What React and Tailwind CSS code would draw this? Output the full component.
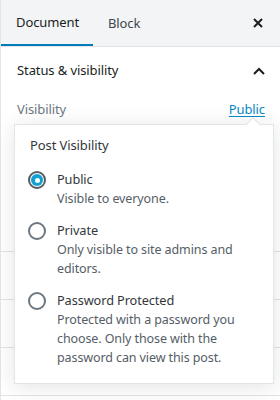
import React from 'react';

const font = { fontFamily: '"Noto Sans", "Open Sans", sans-serif' };

const options = [
  { label: 'Public', info: 'Visible to everyone.', checked: true },
  { label: 'Private', info: 'Only visible to site admins and editors.' },
  { label: 'Password Protected', info: 'Protected with a password you choose. Only those with the password can view this post.' },
];

const Radio = ({ checked }) =>
  checked ? (
    <span className="mt-[1px] flex h-[18px] w-[18px] shrink-0 items-center justify-center rounded-full border-2 border-[#555d66] bg-white">
      <span className="flex h-[12px] w-[12px] items-center justify-center rounded-full bg-[#11a0d2]">
        <span className="h-[5px] w-[5px] rounded-full bg-white" />
      </span>
    </span>
  ) : (
    <span className="mt-[1px] h-[18px] w-[18px] shrink-0 rounded-full border-2 border-[#6c7781] bg-white" />
  );

export default function App() {
  return (
    <div
      className="relative h-[400px] w-[280px] overflow-hidden border-l border-[#e2e4e7] bg-white text-[12.5px] tracking-[-0.1px] text-[#191e23]"
      style={font}
    >
      <header className="flex h-[47px] items-start border-b border-[#e2e4e7] bg-[#f3f4f5] text-[13px]">
        <button className="flex h-[46px] w-[92px] items-center border-b-2 border-[#007cba] pl-[15px] pt-[1px] text-[#191e23]">
          Document
        </button>
        <button className="flex h-[46px] items-center pl-[15px] pt-[1px] text-[#40464d]">Block</button>
        <button className="ml-auto mr-[17px] flex h-[46px] items-center">
          <svg width="10" height="10" viewBox="0 0 10 10">
            <path d="M1 1 L9 9 M9 1 L1 9" stroke="#191e23" strokeWidth="2" />
          </svg>
        </button>
      </header>

      <section className="h-[204px] px-4">
        <div className="flex h-[48px] items-center justify-between">
          <span className="text-[13px] text-[#191e23]">Status &amp; visibility</span>
          <svg width="12" height="8" viewBox="0 0 12 8" className="mr-[-1px]">
            <path d="M1 7 L6 2 L11 7" fill="none" stroke="#191e23" strokeWidth="2" />
          </svg>
        </div>
        <div className="mt-[4px] flex items-center justify-between text-[13px] leading-[20px]">
          <span className="text-[#6c7781]">Visibility</span>
          <a className="mr-[-1px] text-[#0a8ac4] underline underline-offset-2">Public</a>
        </div>
      </section>

      <div className="h-[48px] border-t border-[#e2e4e7]" />
      <div className="h-[48px] border-t border-[#e2e4e7]" />
      <div className="h-[48px] border-t border-[#e2e4e7]" />
      <div className="h-[48px] border-t border-[#e2e4e7]" />

      <div className="absolute left-[13px] top-[124px] w-[260px] border border-[#e2e4e7] bg-white pb-[16px] pl-[13px] pr-[14px] pt-[10px] shadow-[0_3px_20px_rgba(25,30,35,0.12)]">
        <span className="absolute left-[233px] top-[-6px] h-[10px] w-[10px] rotate-45 border-l border-t border-[#e2e4e7] bg-white" />
        <h2 className="ml-[2px] text-[13px] leading-[20px] text-[#32373c]">Post Visibility</h2>
        <div className="mt-[15px] flex flex-col gap-[13px]">
          {options.map((o) => (
            <label key={o.label} className="flex gap-[11px] leading-[19px]">
              <Radio checked={o.checked} />
              <span className="flex flex-col">
                <span className="text-[12.75px] text-[#32373c]">{o.label}</span>
                <span className="text-[#555d66]">{o.info}</span>
              </span>
            </label>
          ))}
        </div>
      </div>
    </div>
  );
}
